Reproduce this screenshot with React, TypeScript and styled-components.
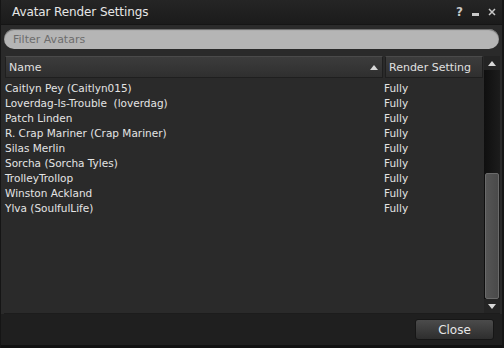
import React from 'react';
import styled, { createGlobalStyle } from 'styled-components';

const GlobalStyle = createGlobalStyle`
  html, body {
    margin: 0;
    padding: 0;
    background: #0e0e0e;
  }
  body {
    font-family: 'DejaVu Sans', 'Liberation Sans', sans-serif;
  }
`;

const Floater = styled.div`
  width: 504px;
  height: 348px;
  box-sizing: border-box;
  display: flex;
  flex-direction: column;
  background: #2a2a2a;
  border-left: 1px solid #151515;
  border-right: 2px solid #151515;
  overflow: hidden;
`;

const TitleBar = styled.div`
  height: 24px;
  flex: none;
  display: flex;
  align-items: center;
  padding: 0 6px 0 11px;
  background: linear-gradient(#252525, #1b1b1b);
  border-bottom: 1px solid #151515;
`;

const Title = styled.div`
  flex: 1;
  color: #e6e6e6;
  font-size: 12px;
  letter-spacing: -0.1px;
`;

const TitleButtons = styled.div`
  display: flex;
  align-items: center;
  gap: 9px;
  color: #c8c8c8;
  font-size: 12px;
  font-weight: bold;
`;

const FilterWrap = styled.div`
  padding: 4px 3px 6px 3px;
`;

const Filter = styled.div`
  height: 20px;
  border-radius: 10px;
  background: #b5b5b5;
  box-shadow: inset 0 1px 1px #6a6a6a;
  display: flex;
  align-items: center;
  padding-left: 9px;
  color: #6d6d6d;
  font-size: 11px;
`;

const ListArea = styled.div`
  flex: 1;
  display: flex;
  margin: 1px 2px 0 3px;
  border-bottom: 1px solid #1c1c1c;
`;

const ListMain = styled.div`
  flex: 1;
  display: flex;
  flex-direction: column;
`;

const Header = styled.div`
  height: 22px;
  display: flex;
  gap: 2px;
  padding: 0 1px;
`;

const HeaderCell = styled.div<{ $w?: number }>`
  ${(p) => (p.$w ? `width: ${p.$w}px;` : 'flex: 1;')}
  box-sizing: border-box;
  display: flex;
  align-items: center;
  padding: 0 4px 0 3px;
  background: linear-gradient(#3c3c3c, #2f2f2f);
  border: 1px solid #1f1f1f;
  border-top-color: #4a4a4a;
  color: #e0e0e0;
  font-size: 11px;
`;

const HeaderLabel = styled.span`
  flex: 1;
`;

const Rows = styled.div`
  padding-top: 2px;
`;

const Row = styled.div`
  height: 15px;
  display: flex;
  align-items: center;
  color: #e4e4e4;
  font-size: 10.5px;
`;

const NameCell = styled.div`
  width: 379px;
  padding-left: 1px;
  white-space: pre;
`;

const SettingCell = styled.div``;

const Scrollbar = styled.div`
  width: 16px;
  display: flex;
  flex-direction: column;
  background: #1a1a1a;
`;

const ScrollButton = styled.div`
  height: 14px;
  display: flex;
  align-items: center;
  justify-content: center;
  background: #242424;
`;

const Track = styled.div`
  flex: 1;
  display: flex;
  flex-direction: column;
  background: linear-gradient(90deg, #0f0f0f, #1c1c1c);
`;

const Thumb = styled.div`
  margin-top: auto;
  height: 124px;
  margin-left: 1px;
  margin-right: 1px;
  border: 1px solid #6a6a6a;
  border-radius: 2px;
  background: linear-gradient(90deg, #555, #4a4a4a);
`;

const Footer = styled.div`
  height: 31px;
  flex: none;
  display: flex;
  align-items: center;
  justify-content: flex-end;
  padding-right: 8px;
  background: #1f1f1f;
`;

const CloseButton = styled.button`
  width: 79px;
  height: 21px;
  border: 1px solid #161616;
  border-radius: 3px;
  background: linear-gradient(#4b4b4b, #2e2e2e);
  color: #e6e6e6;
  font-family: 'DejaVu Sans', sans-serif;
  font-size: 12px;
  padding: 0;
`;

const BottomStrip = styled.div`
  height: 3px;
  flex: none;
  background: #111;
`;

const Arrow = ({ up }: { up?: boolean }) => (
  <svg width="8" height="5" viewBox="0 0 8 5">
    <path d={up ? 'M0 5 L4 0 L8 5 Z' : 'M0 0 L4 5 L8 0 Z'} fill="#d8d8d8" />
  </svg>
);

const avatars = [
  'Caitlyn Pey (Caitlyn015)',
  'Loverdag-Is-Trouble  (loverdag)',
  'Patch Linden',
  'R. Crap Mariner (Crap Mariner)',
  'Silas Merlin',
  'Sorcha (Sorcha Tyles)',
  'TrolleyTrollop',
  'Winston Ackland',
  'Ylva (SoulfulLife)',
];

export default function App() {
  return (
    <>
      <GlobalStyle />
      <Floater>
        <TitleBar>
          <Title>Avatar Render Settings</Title>
          <TitleButtons>
            <span>?</span>
            <svg width="7" height="8" viewBox="0 0 7 8">
              <rect x="0" y="5" width="7" height="3" fill="#c8c8c8" />
            </svg>
            <svg width="8" height="8" viewBox="0 0 8 8">
              <path d="M1 1 L7 7 M7 1 L1 7" stroke="#c8c8c8" strokeWidth="1.5" />
            </svg>
          </TitleButtons>
        </TitleBar>
        <FilterWrap>
          <Filter>Filter Avatars</Filter>
        </FilterWrap>
        <ListArea>
          <ListMain>
            <Header>
              <HeaderCell>
                <HeaderLabel>Name</HeaderLabel>
                <Arrow up />
              </HeaderCell>
              <HeaderCell $w={98}>
                <HeaderLabel>Render Setting</HeaderLabel>
              </HeaderCell>
            </Header>
            <Rows>
              {avatars.map((name) => (
                <Row key={name}>
                  <NameCell>{name}</NameCell>
                  <SettingCell>Fully</SettingCell>
                </Row>
              ))}
            </Rows>
          </ListMain>
          <Scrollbar>
            <ScrollButton>
              <Arrow up />
            </ScrollButton>
            <Track>
              <Thumb />
            </Track>
            <ScrollButton>
              <Arrow />
            </ScrollButton>
          </Scrollbar>
        </ListArea>
        <Footer>
          <CloseButton>Close</CloseButton>
        </Footer>
        <BottomStrip />
      </Floater>
    </>
  );
}
